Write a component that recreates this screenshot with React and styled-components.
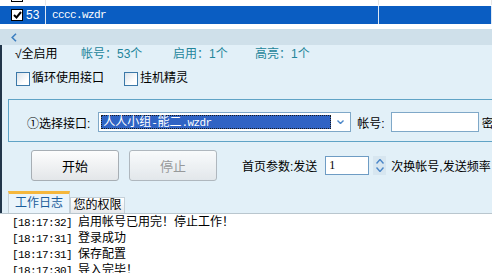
import React from 'react';
import styled, { createGlobalStyle } from 'styled-components';

const GlobalStyle = createGlobalStyle`
  html, body {
    margin: 0;
    padding: 0;
  }
  body {
    width: 492px;
    height: 273px;
    overflow: hidden;
    background: #fff;
    font-family: "Liberation Sans", "Noto Sans CJK SC", sans-serif;
    font-size: 12px;
    color: #000;
  }
`;

const Window = styled.div`
  display: flex;
  flex-direction: column;
  width: 492px;
  height: 273px;
  overflow: hidden;
`;

const List = styled.div`
  flex: none;
  height: 29px;
  box-sizing: border-box;
  padding-bottom: 5px;
  display: flex;
  flex-direction: column;
  justify-content: flex-end;
  gap: 1px;
  overflow: hidden;
  background: #fff;
`;

const Row = styled.div`
  flex: none;
  height: 18px;
  display: grid;
  grid-template-columns: 46px 333px 1fr;
  background: ${(p) => (p.$selected ? '#0a5dc2' : '#fff')};
  color: ${(p) => (p.$selected ? '#fff' : '#000')};
`;

const Cell = styled.div`
  display: flex;
  align-items: center;
  gap: 3px;
  padding-left: ${(p) => p.$pad || 0}px;
  border-right: 1px solid ${(p) => (p.$selected ? '#dfe8f3' : '#e6e6e6')};
  white-space: nowrap;
  overflow: hidden;
`;

const RowCheck = styled.span`
  flex: none;
  width: 12px;
  height: 12px;
  box-sizing: border-box;
  border: 1px solid #000;
  background: #fff;
  display: flex;
  align-items: center;
  justify-content: center;
`;

const Mono = styled.span`
  font-family: "Liberation Mono", monospace;
  font-size: 11px;
  letter-spacing: -0.6px;
`;

const HScroll = styled.div`
  flex: none;
  height: 16px;
  background: #cfe0ea;
  display: flex;
  align-items: center;
  padding-left: 11px;
`;

const Panel = styled.div`
  flex: none;
  height: 168px;
  box-sizing: border-box;
  padding-top: 1px;
  background: #e2f0f8;
  border-left: 2px solid #22364a;
  display: flex;
  flex-direction: column;
`;

const Summary = styled.div`
  height: 16px;
  line-height: 16px;
  padding-left: 13px;
  display: flex;
  white-space: nowrap;
`;

const Stat = styled.span`
  flex: none;
  width: ${(p) => (p.$w ? `${p.$w}px` : 'auto')};
  color: ${(p) => (p.$teal ? '#23859a' : '#000')};
`;

const Options = styled.div`
  margin-top: 9px;
  height: 15px;
  padding-left: 14px;
  display: flex;
  align-items: center;
  gap: 20px;
`;

const Option = styled.label`
  display: flex;
  align-items: center;
  gap: 2px;
  line-height: 15px;
`;

const Box = styled.span`
  width: 14px;
  height: 14px;
  box-sizing: border-box;
  border: 1px solid #3b78a8;
  background: linear-gradient(135deg, #d9e2ea, #ffffff 70%);
`;

const GroupBox = styled.div`
  flex: none;
  margin: 13px 0 0 6px;
  width: 520px;
  height: 43px;
  box-sizing: border-box;
  border: 1px solid #5fa3c6;
  padding: 3px 0 0 18px;
  display: flex;
  align-items: center;
  white-space: nowrap;
`;

const Select = styled.div`
  flex: none;
  margin-left: 8px;
  width: 253px;
  height: 20px;
  box-sizing: border-box;
  border: 1px solid #7fa8c8;
  background: #fff;
  padding: 2px 1px 2px 2px;
  display: flex;
  align-items: stretch;
`;

const Picked = styled.span`
  flex: 1;
  box-sizing: border-box;
  border: 1px dotted #1a1a1a;
  background: #2f63c4;
  color: #fff;
  line-height: 12px;
  padding-left: 1px;
  white-space: nowrap;
`;

const Arrow = styled.span`
  flex: none;
  width: 18px;
  display: flex;
  align-items: center;
  justify-content: center;
`;

const Field = styled.span`
  flex: none;
  margin-left: ${(p) => p.$gap}px;
`;

const TextInput = styled.div`
  flex: none;
  margin-left: 6px;
  width: 88px;
  height: 20px;
  box-sizing: border-box;
  border: 1px solid #7fa8c8;
  background: #fff;
`;

const Actions = styled.div`
  flex: none;
  margin-top: 8px;
  height: 31px;
  padding-left: 29px;
  display: flex;
  align-items: center;
  white-space: nowrap;
`;

const Button = styled.button`
  flex: none;
  width: 88px;
  height: 31px;
  margin-right: ${(p) => p.$gap || 0}px;
  padding: 0;
  border: 1px solid #a7aeb4;
  border-radius: 3px;
  background: linear-gradient(#fdfdfd, #e3e6e9);
  font-family: "Liberation Sans", "Noto Sans CJK SC", sans-serif;
  font-size: 13px;
  color: ${(p) => (p.disabled ? '#8a8a8a' : '#000')};
  opacity: ${(p) => (p.disabled ? 0.85 : 1)};
`;

const SpinInput = styled.div`
  flex: none;
  margin-left: 8px;
  width: 44px;
  height: 19px;
  box-sizing: border-box;
  border: 1px solid #6e9cc4;
  background: #fff;
  padding-left: 3px;
  font-family: "Liberation Serif", serif;
  font-size: 12px;
  line-height: 17px;
`;

const Spin = styled.span`
  flex: none;
  margin-left: 4px;
  width: 13px;
  height: 19px;
  display: flex;
  flex-direction: column;
  align-items: center;
  justify-content: center;
  gap: 3px;
  background: #d7e6f0;
`;

const TabBar = styled.div`
  flex: none;
  margin-top: 10px;
  height: 22px;
  padding-left: 6px;
  display: flex;
  align-items: flex-end;
`;

const Tab = styled.div`
  flex: none;
  width: ${(p) => p.$w}px;
  height: ${(p) => (p.$active ? 22 : 16)}px;
  box-sizing: border-box;
  border: 1px solid #c4d0d8;
  border-bottom: none;
  border-top: ${(p) => (p.$active ? '3px solid #f5b73d' : '1px solid #c4d0d8')};
  background: ${(p) => (p.$active ? '#eaf4fb' : 'linear-gradient(#ffffff, #e6e9ec)')};
  color: ${(p) => (p.$active ? '#1b5d9c' : '#000')};
  text-align: center;
  line-height: ${(p) => (p.$active ? 19 : 15)}px;
  font-size: 12px;
`;

const Log = styled.div`
  flex: 1;
  background: #fff;
  border-top: 1px solid #b9c6ce;
  padding-left: 12px;
`;

const LogLine = styled.div`
  height: 16px;
  line-height: 16px;
  white-space: nowrap;
`;

const Check = () => (
  <svg width="9" height="8" viewBox="0 0 9 8">
    <path d="M1 4 L3.5 6.5 L8 1" fill="none" stroke="#000" strokeWidth="2" />
  </svg>
);

const Chevron = ({ dir, color = '#4a86c8', w = 7, h = 4 }) => {
  const d = {
    down: `M0.5 0.5 L${w / 2} ${h - 0.5} L${w - 0.5} 0.5`,
    up: `M0.5 ${h - 0.5} L${w / 2} 0.5 L${w - 0.5} ${h - 0.5}`,
  }[dir];
  return (
    <svg width={w} height={h} viewBox={`0 0 ${w} ${h}`}>
      <path d={d} fill="none" stroke={color} strokeWidth="1.4" />
    </svg>
  );
};

const logs = [
  ['18:17:32', '启用帐号已用完！停止工作！'],
  ['18:17:31', '登录成功'],
  ['18:17:31', '保存配置'],
  ['18:17:30', '导入完毕！'],
];

const App = () => (
  <Window>
    <GlobalStyle />
    <List>
      <Row>
        <Cell $pad={11}>
          <RowCheck>
            <Check />
          </RowCheck>
          <span>52</span>
        </Cell>
        <Cell $pad={6}>
          <Mono>bbbb.wzdr</Mono>
        </Cell>
        <Cell />
      </Row>
      <Row $selected>
        <Cell $pad={11} $selected>
          <RowCheck>
            <Check />
          </RowCheck>
          <span>53</span>
        </Cell>
        <Cell $pad={6} $selected>
          <Mono>cccc.wzdr</Mono>
        </Cell>
        <Cell $selected />
      </Row>
    </List>

    <HScroll>
      <svg width="6" height="9" viewBox="0 0 6 9">
        <path d="M5 0.7 L1.2 4.5 L5 8.3" fill="none" stroke="#3d7fc0" strokeWidth="1.6" />
      </svg>
    </HScroll>

    <Panel>
      <Summary>
        <Stat $w={66}>√全启用</Stat>
        <Stat $w={92} $teal>帐号：53个</Stat>
        <Stat $w={82} $teal>启用：1个</Stat>
        <Stat $teal>高亮：1个</Stat>
      </Summary>

      <Options>
        <Option>
          <Box />
          循环使用接口
        </Option>
        <Option>
          <Box />
          挂机精灵
        </Option>
      </Options>

      <GroupBox>
        <span>①选择接口:</span>
        <Select>
          <Picked>
            人人小组<Mono>-</Mono>能二<Mono>.wzdr</Mono>
          </Picked>
          <Arrow>
            <Chevron dir="down" />
          </Arrow>
        </Select>
        <Field $gap={6}>帐号:</Field>
        <TextInput />
        <Field $gap={3}>密码:</Field>
      </GroupBox>

      <Actions>
        <Button $gap={10}>开始</Button>
        <Button disabled>停止</Button>
        <Field $gap={25}>首页参数:发送</Field>
        <SpinInput>1</SpinInput>
        <Spin>
          <Chevron dir="up" w={8} h={5} />
          <Chevron dir="down" w={8} h={5} />
        </Spin>
        <Field $gap={5}>次换帐号,发送频率</Field>
      </Actions>

      <TabBar>
        <Tab $active $w={62}>工作日志</Tab>
        <Tab $w={55}>您的权限</Tab>
      </TabBar>
    </Panel>

    <Log>
      {logs.map(([time, text], i) => (
        <LogLine key={i}>
          <Mono>[{time}] </Mono>
          {text}
        </LogLine>
      ))}
    </Log>
  </Window>
);

export default App;
